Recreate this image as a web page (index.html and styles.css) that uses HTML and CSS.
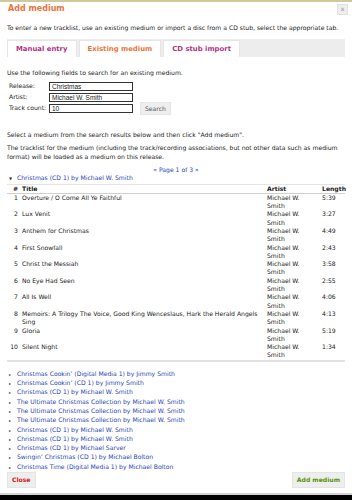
FILE: index.html
```html
<!DOCTYPE html>
<html>
<head>
<meta charset="utf-8">
<link rel="stylesheet" href="styles.css">
</head>
<body>
<div class="dialog">
  <div class="titlebar">
    <span class="title">Add medium</span>
    <span class="close-x">x</span>
  </div>
  <div class="content">
    <p class="intro">To enter a new tracklist, use an existing medium or import a disc from a CD stub, select the appropriate tab.</p>
    <ul class="tabs">
      <li class="tab">Manual entry</li>
      <li class="tab active">Existing medium</li>
      <li class="tab">CD stub import</li>
    </ul>
    <p class="p-use">Use the following fields to search for an existing medium.</p>
    <div class="form">
      <div class="frow"><span class="flabel">Release:</span><span class="finput">Christmas</span></div>
      <div class="frow"><span class="flabel">Artist:</span><span class="finput">Michael W. Smith</span></div>
      <div class="frow"><span class="flabel">Track count:</span><span class="finput">10</span><span class="btn-search">Search</span></div>
    </div>
    <p class="p-select">Select a medium from the search results below and then click "Add medium".</p>
    <p class="p-track">The tracklist for the medium (including the track/recording associations, but not other data such as medium format) will be loaded as a medium on this release.</p>
    <div class="pager">« Page 1 of 3 »</div>
    <div class="result open"><span class="tri">▼</span><span class="link">Christmas (CD 1) by Michael W. Smith</span></div>
    <table class="tracks">
      <colgroup>
        <col class="w-num"><col class="w-title"><col class="w-artist"><col class="w-len">
      </colgroup>
      <thead>
        <tr><th class="c-num">#</th><th>Title</th><th>Artist</th><th>Length</th></tr>
      </thead>
      <tbody>
        <tr><td class="c-num">1</td><td>Overture / O Come All Ye Faithful</td><td class="c-artist">Michael W. Smith</td><td>5:39</td></tr>
        <tr><td class="c-num">2</td><td>Lux Venit</td><td class="c-artist">Michael W. Smith</td><td>3:27</td></tr>
        <tr><td class="c-num">3</td><td>Anthem for Christmas</td><td class="c-artist">Michael W. Smith</td><td>4:49</td></tr>
        <tr><td class="c-num">4</td><td>First Snowfall</td><td class="c-artist">Michael W. Smith</td><td>2:43</td></tr>
        <tr><td class="c-num">5</td><td>Christ the Messiah</td><td class="c-artist">Michael W. Smith</td><td>3:58</td></tr>
        <tr><td class="c-num">6</td><td>No Eye Had Seen</td><td class="c-artist">Michael W. Smith</td><td>2:55</td></tr>
        <tr><td class="c-num">7</td><td>All Is Well</td><td class="c-artist">Michael W. Smith</td><td>4:06</td></tr>
        <tr><td class="c-num">8</td><td>Memoirs: A Trilogy The Voice, Good King Wenceslaus, Hark the Herald Angels Sing</td><td class="c-artist">Michael W. Smith</td><td>4:13</td></tr>
        <tr><td class="c-num">9</td><td>Gloria</td><td class="c-artist">Michael W. Smith</td><td>5:19</td></tr>
        <tr><td class="c-num">10</td><td>Silent Night</td><td class="c-artist">Michael W. Smith</td><td>1:34</td></tr>
      </tbody>
    </table>
    <ul class="results">
      <li><span class="tri">▸</span><span class="link">Christmas Cookin’ (Digital Media 1) by Jimmy Smith</span></li>
      <li><span class="tri">▸</span><span class="link">Christmas Cookin’ (CD 1) by Jimmy Smith</span></li>
      <li><span class="tri">▸</span><span class="link">Christmas (CD 1) by Michael W. Smith</span></li>
      <li><span class="tri">▸</span><span class="link">The Ultimate Christmas Collection by Michael W. Smith</span></li>
      <li><span class="tri">▸</span><span class="link">The Ultimate Christmas Collection by Michael W. Smith</span></li>
      <li><span class="tri">▸</span><span class="link">The Ultimate Christmas Collection by Michael W. Smith</span></li>
      <li><span class="tri">▸</span><span class="link">Christmas (CD 1) by Michael W. Smith</span></li>
      <li><span class="tri">▸</span><span class="link">Christmas (CD 1) by Michael W. Smith</span></li>
      <li><span class="tri">▸</span><span class="link">Christmas (CD 1) by Michael Sarver</span></li>
      <li><span class="tri">▸</span><span class="link">Swingin’ Christmas (CD 1) by Michael Bolton</span></li>
      <li><span class="tri">▸</span><span class="link">Christmas Time (Digital Media 1) by Michael Bolton</span></li>
    </ul>
  </div>
  <div class="buttons">
    <span class="btn btn-close">Close</span>
    <span class="btn btn-add">Add medium</span>
  </div>
</div>
</body>
</html>
```

FILE: styles.css
```css
html {
  background: #000;
}
body {
  margin: 0;
  font-family: "DejaVu Sans", Verdana, sans-serif;
  font-size: 6.1px;
  line-height: 8.3px;
  color: #222;
}
.dialog {
  width: 352px;
  height: 495px;
  box-sizing: border-box;
  background: #fff;
  border-top: 2px solid #cfc99b;
  border-bottom: 2px solid #d4d4d4;
  display: flex;
  flex-direction: column;
}
.titlebar {
  display: flex;
  justify-content: space-between;
  align-items: center;
  height: 18px;
  padding: 0 4px 0 8px;
}
.title {
  color: #eb743b;
  font-weight: bold;
  font-size: 8px;
}
.close-x {
  width: 9px;
  height: 9px;
  background: #eee;
  border: 1px solid #e2e2e2;
  color: #888;
  font-size: 6px;
  line-height: 8px;
  text-align: center;
}
.content {
  padding: 0 7px;
  flex: 1;
}
p {
  margin: 0;
}
.intro {
  margin-top: 8px;
}
.tabs {
  list-style: none;
  margin: 6px 0 0;
  padding: 1px 0 0;
  height: 18px;
  box-sizing: border-box;
  background: #ededed;
  display: flex;
  gap: 2px;
}
.tab {
  background: #fff;
  color: #b5307f;
  font-weight: bold;
  font-size: 6.9px;
  padding: 0 8px;
  display: flex;
  align-items: center;
  border: 1px solid #e6e6e6;
  border-bottom: none;
}
.tab.active {
  color: #eb743b;
}
.p-use {
  margin-top: 12px;
}
.form {
  margin-top: 5px;
  display: flex;
  flex-direction: column;
  gap: 2px;
}
.frow {
  display: flex;
  align-items: center;
  height: 9px;
}
.flabel {
  width: 40px;
  padding-left: 2px;
}
.finput {
  width: 84px;
  height: 9px;
  box-sizing: border-box;
  border: 1px solid #333;
  font-family: "Liberation Sans", Arial, sans-serif;
  font-size: 6.5px;
  line-height: 7px;
  padding-left: 2px;
}
.btn-search {
  margin-left: 7px;
  background: #eee;
  border: 1px solid #e6e6e6;
  color: #555;
  padding: 0 4px;
  height: 11px;
  line-height: 11px;
}
.p-select {
  margin-top: 18px;
}
.p-track {
  margin-top: 5px;
}
.pager {
  text-align: center;
  color: #1f45b8;
  margin-top: 5px;
}
.link {
  color: #1f45b8;
}
.tri {
  display: inline-block;
  width: 10px;
  font-size: 4px;
  color: #333;
  padding-left: 2px;
  box-sizing: border-box;
}
.tracks {
  width: 100%;
  table-layout: fixed;
  border-collapse: collapse;
  border-bottom: 2px solid #e0e0e0;
}
.w-num {
  width: 14px;
}
.w-artist {
  width: 55px;
}
.w-len {
  width: 24px;
}
.tracks th {
  text-align: left;
  font-weight: bold;
  border-top: 1px solid #e4e4e4;
  border-bottom: 1px solid #d0d0d0;
  padding: 0 1px;
  height: 8px;
}
.tracks td {
  vertical-align: top;
  padding: 0 1px;
  height: 16.6px;
}
.tracks td.c-artist {
  padding-right: 8px;
}
.tracks .c-num {
  text-align: right;
  padding: 0 3px 0 0;
}
.results {
  list-style: none;
  margin: 8px 0 0;
  padding: 0;
}
.buttons {
  display: flex;
  justify-content: space-between;
  padding: 0 7px 5px;
  align-items: center;
}
.btn {
  background: #eee;
  border: 1px solid #e4e4e4;
  font-weight: bold;
  padding: 0 4px;
  height: 14px;
  line-height: 14px;
}
.btn-close {
  color: #d2231b;
}
.btn-add {
  color: #5a8f0a;
}
```
